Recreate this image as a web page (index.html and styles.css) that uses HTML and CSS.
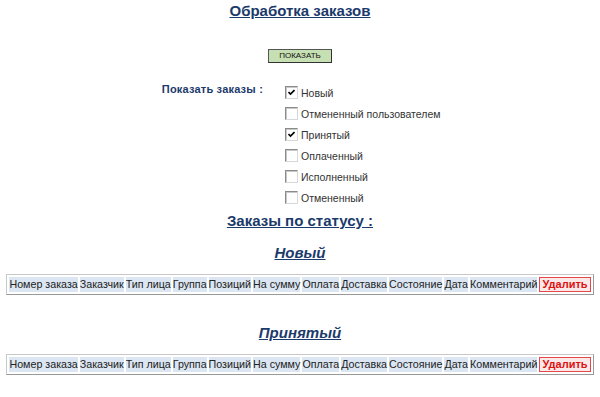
FILE: index.html
```html
<!DOCTYPE html>
<html lang="ru">
<head>
<meta charset="utf-8">
<title>Обработка заказов</title>
<link rel="stylesheet" href="styles.css">
</head>
<body>
<h1 class="title">Обработка заказов</h1>
<div class="btn-row"><button class="show-btn" type="button">ПОКАЗАТЬ</button></div>
<div class="filter">
  <div class="filter-label">Показать заказы :</div>
  <ul class="filter-list">
    <li><span class="cb checked"><svg viewBox="0 0 7 7" width="7" height="7"><path d="M0.5 3 L2.5 5 L6.5 1" fill="none" stroke="#000" stroke-width="1.6"/></svg></span>Новый</li>
    <li><span class="cb"></span>Отмененный пользователем</li>
    <li><span class="cb checked"><svg viewBox="0 0 7 7" width="7" height="7"><path d="M0.5 3 L2.5 5 L6.5 1" fill="none" stroke="#000" stroke-width="1.6"/></svg></span>Принятый</li>
    <li><span class="cb"></span>Оплаченный</li>
    <li><span class="cb"></span>Исполненный</li>
    <li><span class="cb"></span>Отмененный</li>
  </ul>
</div>
<h2 class="section-title">Заказы по статусу :</h2>
<h3 class="status-title">Новый</h3>
<table class="orders">
  <tr><td>Номер заказа</td><td>Заказчик</td><td>Тип лица</td><td>Группа</td><td>Позиций</td><td>На сумму</td><td>Оплата</td><td>Доставка</td><td>Состояние</td><td>Дата</td><td>Комментарий</td><td class="del">Удалить</td></tr>
</table>
<h3 class="status-title second">Принятый</h3>
<table class="orders">
  <tr><td>Номер заказа</td><td>Заказчик</td><td>Тип лица</td><td>Группа</td><td>Позиций</td><td>На сумму</td><td>Оплата</td><td>Доставка</td><td>Состояние</td><td>Дата</td><td>Комментарий</td><td class="del">Удалить</td></tr>
</table>
</body>
</html>
```
FILE: styles.css
```css
html, body {
  margin: 0;
  padding: 0;
  background: #fff;
  font-family: "Liberation Sans", Arial, sans-serif;
  color: #333;
}
.title {
  margin: 0;
  padding-top: 2px;
  text-align: center;
  font-size: 15px;
  font-weight: bold;
  line-height: 17px;
  color: #1b3a6b;
  text-decoration: underline;
}
.btn-row {
  display: flex;
  justify-content: center;
  margin-top: 30px;
}
.show-btn {
  width: 64px;
  height: 14px;
  padding: 0;
  background: #c6e0b3;
  border: 1px solid #333;
  border-top-color: #555;
  border-left-color: #555;
  font-family: "Liberation Sans", Arial, sans-serif;
  font-size: 8px;
  line-height: 12px;
  color: #111;
}
.filter {
  display: flex;
  margin-top: 23px;
}
.filter-label {
  width: 263px;
  margin-top: -4px;
  text-align: right;
  font-size: 11px;
  font-weight: bold;
  color: #1b3a6b;
  line-height: 14px;
  letter-spacing: 0.2px;
}
.filter-list {
  list-style: none;
  margin: 0 0 0 22px;
  padding: 0;
}
.filter-list li {
  display: flex;
  align-items: center;
  height: 13px;
  margin-bottom: 8px;
  font-size: 10.5px;
  color: #333;
}
.filter-list li:last-child { margin-bottom: 0; }
.cb {
  box-sizing: border-box;
  width: 13px;
  height: 13px;
  margin-right: 3px;
  border: 1px solid #8a8a8a;
  border-right-color: #d8d8d8;
  border-bottom-color: #d8d8d8;
  box-shadow: inset 1px 1px 0 #c8c8c8;
  background: #fff;
  display: flex;
  align-items: center;
  justify-content: center;
}
.section-title {
  margin: 8px 0 0;
  text-align: center;
  font-size: 15px;
  font-weight: bold;
  line-height: 17px;
  color: #1b3a6b;
  text-decoration: underline;
}
.status-title {
  margin: 15px 0 0;
  text-align: center;
  font-size: 15px;
  font-weight: bold;
  font-style: italic;
  line-height: 17px;
  color: #1b3a6b;
  text-decoration: underline;
}
.status-title.second { margin-top: 29px; }
.orders {
  margin: 13px auto 0;
  border-collapse: separate;
  border-spacing: 2px;
  border: 1px solid #c8c8c8;
  border-right-color: #999;
  border-bottom-color: #999;
  background: #fff;
}
.orders td {
  background: #dbe6f2;
  padding: 1px 0;
  font-size: 10.7px;
  line-height: 13px;
  color: #222;
  white-space: nowrap;
}
.orders td.del {
  background: #fbe9e9;
  border: 1px solid #e54848;
  color: #e01010;
  font-size: 11px;
  font-weight: bold;
  padding: 0 2px;
}
```
